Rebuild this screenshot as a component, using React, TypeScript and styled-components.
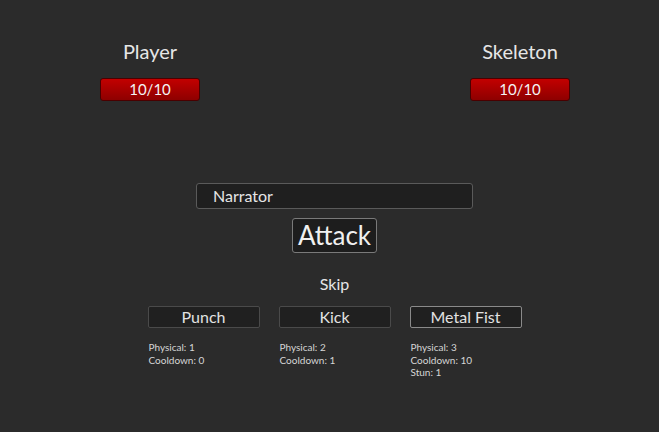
import React from "react";
import styled, { createGlobalStyle } from "styled-components";

const GlobalStyle = createGlobalStyle`
  html, body {
    margin: 0;
    padding: 0;
    background: #2b2b2b;
  }
  body {
    font-family: "Lato", "Noto Sans", sans-serif;
    color: #e8e8e8;
  }
`;

type Skill = { name: string; stats: string[]; active?: boolean };

const skills: Skill[] = [
  { name: "Punch", stats: ["Physical: 1", "Cooldown: 0"] },
  { name: "Kick", stats: ["Physical: 2", "Cooldown: 1"] },
  { name: "Metal Fist", stats: ["Physical: 3", "Cooldown: 10", "Stun: 1"], active: true },
];

function App() {
  return (
    <Screen>
      <GlobalStyle />
      <Fighters>
        <Fighter>
          <FighterName>Player</FighterName>
          <HealthBar>10/10</HealthBar>
        </Fighter>
        <Fighter>
          <FighterName>Skeleton</FighterName>
          <HealthBar>10/10</HealthBar>
        </Fighter>
      </Fighters>

      <Center>
        <Narrator>Narrator</Narrator>
        <AttackButton>Attack</AttackButton>
        <SkipButton>Skip</SkipButton>
        <SkillRow>
          {skills.map((s) => (
            <SkillColumn key={s.name}>
              <SkillButton $active={s.active}>{s.name}</SkillButton>
              <Stats>
                {s.stats.map((line) => (
                  <div key={line}>{line}</div>
                ))}
              </Stats>
            </SkillColumn>
          ))}
        </SkillRow>
      </Center>
    </Screen>
  );
}

export default App;

const Screen = styled.div`
  width: 659px;
  height: 432px;
  background: #2b2b2b;
  overflow: hidden;
`;

const Fighters = styled.div`
  display: flex;
  justify-content: space-between;
  padding: 38px 89px 0 100px;
`;

const Fighter = styled.div`
  width: 100px;
  display: flex;
  flex-direction: column;
  align-items: center;
`;

const FighterName = styled.div`
  font-size: 20px;
  line-height: 26px;
  color: #e6e6e6;
  white-space: nowrap;
`;

const HealthBar = styled.div`
  margin-top: 14px;
  box-sizing: border-box;
  width: 100px;
  height: 23px;
  border: 1px solid #4a0000;
  border-radius: 3px;
  background: linear-gradient(#c20000, #8e0000);
  color: #f4f4f4;
  font-size: 15px;
  line-height: 21px;
  text-align: center;
`;

const Center = styled.div`
  display: flex;
  flex-direction: column;
  align-items: center;
  margin-top: 82px;
  padding-left: 10px;
`;

const Narrator = styled.div`
  box-sizing: border-box;
  width: 277px;
  height: 26px;
  padding-left: 16px;
  border: 1px solid #5a5a5a;
  border-radius: 3px;
  background: #1f1f1f;
  font-size: 16px;
  line-height: 24px;
  color: #e6e6e6;
`;

const AttackButton = styled.div`
  margin-top: 9px;
  box-sizing: border-box;
  width: 85px;
  height: 35px;
  border: 1px solid #7a7a7a;
  border-radius: 3px;
  background: #1d1d1d;
  font-size: 26px;
  line-height: 33px;
  text-align: center;
  color: #f0f0f0;
`;

const SkipButton = styled.div`
  margin-top: 20px;
  font-size: 16px;
  line-height: 22px;
  color: #e6e6e6;
`;

const SkillRow = styled.div`
  display: flex;
  gap: 19px;
  margin-top: 11px;
`;

const SkillColumn = styled.div`
  width: 112px;
  display: flex;
  flex-direction: column;
`;

const SkillButton = styled.div<{ $active?: boolean }>`
  box-sizing: border-box;
  height: 22px;
  border: 1px solid ${(p) => (p.$active ? "#8a8a8a" : "#4a4a4a")};
  border-radius: 2px;
  background: #202020;
  font-size: 16px;
  line-height: 20px;
  text-align: center;
  color: #e2e2e2;
`;

const Stats = styled.div`
  margin-top: 13px;
  padding-left: 1px;
  font-size: 10px;
  line-height: 12.5px;
  color: #d6d6d6;
`;
